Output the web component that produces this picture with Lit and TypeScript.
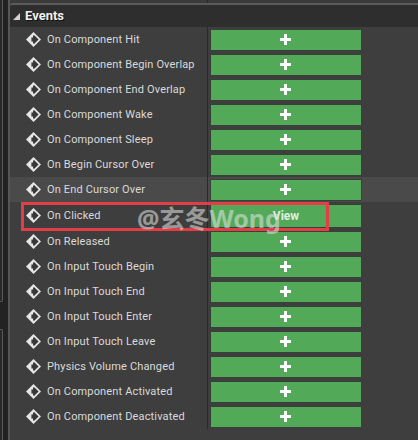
import { LitElement, html, css, svg } from "lit";
import { customElement } from "lit/decorators.js";

const EVENTS = [
  "On Component Hit", "On Component Begin Overlap", "On Component End Overlap",
  "On Component Wake", "On Component Sleep", "On Begin Cursor Over",
  "On End Cursor Over", "On Clicked", "On Released", "On Input Touch Begin",
  "On Input Touch End", "On Input Touch Enter", "On Input Touch Leave",
  "Physics Volume Changed", "On Component Activated", "On Component Deactivated",
];

const diamond = svg`<path d="M7.5 0 L15 7.5 L7.5 15 L0 7.5Z" fill="#e6e6e6"/>
  <path d="M8 2.9 L12.6 7.5 L8 12.1 L7 11.1 V9.5 H5.4 V5.5 H7 V3.9Z" fill="#383838"/>`;

@customElement("app-root")
export class AppRoot extends LitElement {
  static styles = css`
    :host { display: flex; position: relative; width: 418px; height: 440px; overflow: hidden;
      background: #3e3e3e; color: #dadada; font-family: Roboto, "Noto Sans CJK SC", sans-serif; }
    .rail { width: 8px; flex: none; background: #222; display: flex; flex-direction: column; gap: 27px; }
    .pane { box-sizing: border-box; width: 3px; border-right: 1px solid #595959; background: #292929; }
    .pane.top { height: 302px; border-bottom: 1px solid #595959; border-radius: 0 0 2px 0; }
    .pane.low { flex: 1; border-top: 1px solid #595959; border-radius: 0 2px 0 0; }
    .panel { flex: 1; min-width: 0; border-left: 2px solid #565656; }
    .above { box-sizing: border-box; height: 3px; background: #3b3b3b; display: flex; padding-left: 197px; }
    .split { width: 1px; background: #292929; }
    .head { box-sizing: border-box; height: 24px; border-top: 2px solid #5b5b5b; border-top-left-radius: 3px;
      background: #2e2e2e; display: flex; align-items: center; padding-left: 3px; gap: 5px; }
    .title { font-size: 13px; line-height: 20px; font-weight: 700; color: #f0f0f0;
      text-shadow: 1px 1px 0 #111; }
    .row { height: 25px; display: flex; }
    .row.hover { background: #4a4a4a; }
    .row.bound { height: 27px; }
    .name { box-sizing: border-box; width: 198px; border-right: 1px solid #292929; display: flex;
      align-items: center; padding-left: 16px; gap: 6px; font-size: 11px; letter-spacing: .15px; white-space: nowrap; }
    .name svg { flex: none; }
    .btn { box-sizing: border-box; width: 150px; margin: 3px 0 2px 3px; background: #52a957;
      box-shadow: 0 0 0 1px #393f39; display: flex; align-items: center; justify-content: center;
      color: #e0efe0; font-size: 12px; font-weight: 700; }
    .btn svg { margin: 0 1px 1px 0; }
    .mark { position: absolute; left: 21px; top: 202px; width: 308px; height: 29px; box-sizing: border-box;
      border: 3px solid #e33e45; }
    .water { position: absolute; left: 137px; top: 201px; font: 700 25px/34px "Noto Sans", "Noto Sans CJK SC", sans-serif;
      color: rgba(225, 225, 225, .58); white-space: nowrap; }
  `;

  render() {
    return html`
      <div class="rail"><div class="pane top"></div><div class="pane low"></div></div>
      <div class="panel">
        <div class="above"><div class="split"></div></div>
        <div class="head">
          <svg width="7" height="7" viewBox="0 0 7 7"><path d="M7 0V7H0Z" fill="#d2d2d2"/></svg>
          <span class="title">Events</span>
        </div>
        ${EVENTS.map((e, i) => html`
          <div class="row ${i === 6 ? "hover" : i === 7 ? "bound" : ""}">
            <div class="name"><svg width="15" height="15" viewBox="0 0 15 15">${diamond}</svg><span>${e}</span></div>
            <div class="btn">${i === 7 ? "View" : html`<svg width="11" height="11" viewBox="0 0 11 11"><path d="M4 0H7V4H11V7H7V11H4V7H0V4H4Z" fill="#fff"/></svg>`}</div>
          </div>`)}
      </div>
      <div class="mark"></div>
      <div class="water">@玄冬Wong</div>
    `;
  }
}
